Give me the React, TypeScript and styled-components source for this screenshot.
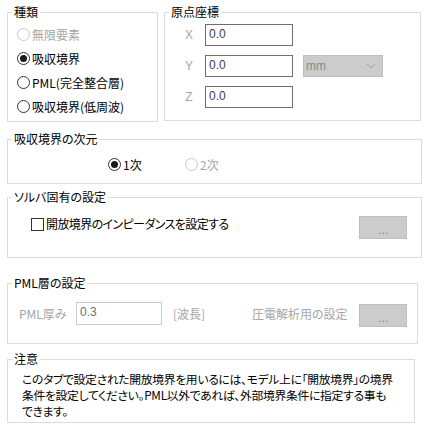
import React from "react";
import styled, { createGlobalStyle } from "styled-components";

const Global = createGlobalStyle`
  html, body { margin: 0; padding: 0; background: #ffffff; }
  body {
    font-family: "Noto Sans CJK JP", "Noto Sans", sans-serif;
    font-size: 12px;
    color: #000;
    font-feature-settings: "palt";
  }
`;

const Page = styled.div`
  width: 430px;
  height: 434px;
  box-sizing: border-box;
  padding: 4px 0 0 7px;
  display: flex;
  flex-direction: column;
`;

const TopRow = styled.div`
  display: flex;
  gap: 6px;
`;

const Group = styled.fieldset<{ $w: number; $h: number; $mt?: number }>`
  box-sizing: border-box;
  margin: ${(p) => p.$mt ?? 0}px 0 0 0;
  padding: 0;
  min-width: 0;
  width: ${(p) => p.$w}px;
  height: ${(p) => p.$h}px;
  border: 1px solid #dcdcdc;
`;

const Legend = styled.legend`
  margin-left: 4px;
  padding: 0 2px;
  line-height: 16px;
  font-size: 12px;
  color: #000;
`;

const RadioCol = styled.div`
  display: flex;
  flex-direction: column;
  padding: 2px 0 0 9px;
`;

const RadioRow = styled.label<{ $disabled?: boolean; $w?: number }>`
  display: flex;
  align-items: center;
  height: 24px;
  ${(p) => (p.$w ? `width: ${p.$w}px;` : "")}
  color: ${(p) => (p.$disabled ? "#a6a6a6" : "#000")};
  white-space: nowrap;
`;

const Circle = styled.span<{ $checked?: boolean; $disabled?: boolean }>`
  box-sizing: border-box;
  width: 13px;
  height: 13px;
  border-radius: 50%;
  border: 1px solid ${(p) => (p.$disabled ? "#c8c8c8" : "#333333")};
  background: #fff;
  margin-right: 2px;
  display: flex;
  align-items: center;
  justify-content: center;
  flex: none;
  &::after {
    content: "";
    display: ${(p) => (p.$checked ? "block" : "none")};
    width: 7px;
    height: 7px;
    border-radius: 50%;
    background: #1a1a1a;
  }
`;

const CoordGrid = styled.div`
  display: grid;
  grid-template-columns: 18px 88px auto;
  column-gap: 7px;
  row-gap: 9px;
  padding: 4px 0 0 15px;
  align-items: center;
`;

const AxisLabel = styled.span`
  text-align: center;
  color: #a6a6a6;
  font-family: "Liberation Sans", sans-serif;
  font-size: 12px;
`;

const TextBox = styled.div<{ $disabled?: boolean; $w: number; $h: number }>`
  box-sizing: border-box;
  width: ${(p) => p.$w}px;
  height: ${(p) => p.$h}px;
  border: 1px solid ${(p) => (p.$disabled ? "#cccccc" : "#6e6e6e")};
  background: #fff;
  padding: 2px 0 0 3px;
  line-height: 14px;
  color: ${(p) => (p.$disabled ? "#6d6d6d" : "#3c3c5a")};
  font-family: "Liberation Sans", sans-serif;
  font-size: 12px;
`;

const Select = styled.div`
  box-sizing: border-box;
  width: 80px;
  height: 22px;
  margin-left: 3px;
  border: 1px solid #bfbfbf;
  background: #cccccc;
  display: flex;
  align-items: center;
  justify-content: space-between;
  padding: 0 6px 0 2px;
  color: #8a8a8a;
  font-family: "Liberation Sans", sans-serif;
  font-size: 12px;
`;

const DimRow = styled.div`
  display: flex;
  padding: 5px 0 0 100px;
`;

const SolverRow = styled.div`
  display: flex;
  align-items: flex-start;
  padding: 11px 14px 0 23px;
`;

const CheckLabel = styled.label`
  display: flex;
  align-items: center;
  height: 14px;
  line-height: 14px;
  margin-top: 1px;
  white-space: nowrap;
  letter-spacing: -0.6px;
`;

const Box = styled.span`
  box-sizing: border-box;
  width: 13px;
  height: 13px;
  border: 1px solid #333333;
  background: #fff;
  margin-right: 2px;
  flex: none;
`;

const DotsButton = styled.button<{ $mt?: number }>`
  box-sizing: border-box;
  width: 48px;
  height: 23px;
  margin: ${(p) => p.$mt ?? 0}px 0 0 auto;
  border: 1px solid #bfbfbf;
  background: #cccccc;
  color: #7a84a0;
  font-family: "Liberation Sans", sans-serif;
  font-size: 12px;
  padding: 4px 0 0 0;
  display: flex;
  align-items: center;
  justify-content: center;
`;

const PmlRow = styled.div`
  display: flex;
  align-items: flex-start;
  padding: 11px 10px 0 11px;
`;

const GrayText = styled.span<{ $w?: number; $ml?: number }>`
  color: #a6a6a6;
  line-height: 23px;
  white-space: nowrap;
  ${(p) => (p.$w ? `width: ${p.$w}px;` : "")}
  margin-left: ${(p) => p.$ml ?? 0}px;
  flex: none;
`;

const Note = styled.div`
  padding: 4px 0 0 14px;
  font-size: 11.8px;
  line-height: 16px;
  white-space: nowrap;
  letter-spacing: -0.3px;
`;

const Chevron = () => (
  <svg width="10" height="6" viewBox="0 0 10 6">
    <path d="M1 1 L5 5 L9 1" fill="none" stroke="#a0a0a0" strokeWidth="1" />
  </svg>
);

export default function App() {
  return (
    <>
      <Global />
      <Page>
        <TopRow>
          <Group $w={151} $h={118}>
            <Legend>種類</Legend>
            <RadioCol>
              <RadioRow $disabled>
                <Circle $disabled />
                無限要素
              </RadioRow>
              <RadioRow>
                <Circle $checked />
                吸収境界
              </RadioRow>
              <RadioRow>
                <Circle />
                PML(完全整合層)
              </RadioRow>
              <RadioRow>
                <Circle />
                吸収境界(低周波)
              </RadioRow>
            </RadioCol>
          </Group>
          <Group $w={257} $h={117}>
            <Legend>原点座標</Legend>
            <CoordGrid>
              <AxisLabel>X</AxisLabel>
              <TextBox $w={88} $h={22}>0.0</TextBox>
              <span />
              <AxisLabel>Y</AxisLabel>
              <TextBox $w={88} $h={22}>0.0</TextBox>
              <Select>
                <span>mm</span>
                <Chevron />
              </Select>
              <AxisLabel>Z</AxisLabel>
              <TextBox $w={88} $h={22}>0.0</TextBox>
              <span />
            </CoordGrid>
          </Group>
        </TopRow>

        <Group $w={415} $h={53} $mt={9}>
          <Legend>吸収境界の次元</Legend>
          <DimRow>
            <RadioRow $w={77}>
              <Circle $checked />
              1次
            </RadioRow>
            <RadioRow $disabled>
              <Circle $disabled />
              2次
            </RadioRow>
          </DimRow>
        </Group>

        <Group $w={415} $h={69} $mt={5}>
          <Legend>ソルバ固有の設定</Legend>
          <SolverRow>
            <CheckLabel>
              <Box />
              開放境界のインピーダンスを設定する
            </CheckLabel>
            <DotsButton>...</DotsButton>
          </SolverRow>
        </Group>

        <Group $w={411} $h={69} $mt={17}>
          <Legend>PML層の設定</Legend>
          <PmlRow>
            <GrayText $w={57}>PML厚み</GrayText>
            <TextBox $disabled $w={86} $h={23}>0.3</TextBox>
            <GrayText $w={79} $ml={11}>[波長]</GrayText>
            <GrayText>圧電解析用の設定</GrayText>
            <DotsButton $mt={2}>...</DotsButton>
          </PmlRow>
        </Group>

        <Group $w={408} $h={72} $mt={7}>
          <Legend>注意</Legend>
          <Note>
            このタブで設定された開放境界を用いるには、モデル上に「開放境界」の境界
            <br />
            条件を設定してください。PML以外であれば、外部境界条件に指定する事も
            <br />
            できます。
          </Note>
        </Group>
      </Page>
    </>
  );
}
